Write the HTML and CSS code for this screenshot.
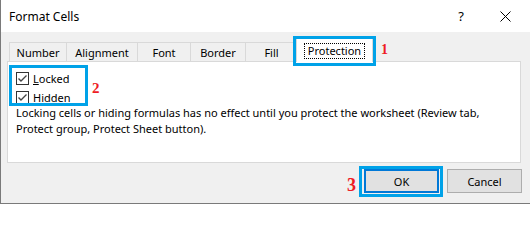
FILE: index.html
```html
<!DOCTYPE html>
<html lang="en">
<head>
<meta charset="utf-8">
<title>Format Cells</title>
<link rel="stylesheet" href="styles.css">
</head>
<body>
<div class="window">
  <div class="titlebar">
    <span class="title">Format Cells</span>
    <span class="help">?</span>
    <svg class="close" width="11" height="11" viewBox="0 0 11 11"><path d="M0.5 0.5 L10.5 10.5 M10.5 0.5 L0.5 10.5" stroke="#000" stroke-width="1" fill="none"/></svg>
  </div>
  <div class="body">
    <div class="tabs">
      <div class="tab t-number">Number</div>
      <div class="tab t-align">Alignment</div>
      <div class="tab t-font">Font</div>
      <div class="tab t-border">Border</div>
      <div class="tab t-fill">Fill</div>
      <div class="tab t-prot selected hl"><span class="focus">Protection</span></div>
      <span class="mark mark1">1</span>
    </div>
    <div class="panel">
      <div class="checks">
        <label class="check"><svg class="box" width="13" height="13" viewBox="0 0 13 13"><rect x="0.5" y="0.5" width="12" height="12" fill="#fff" stroke="#333"/><path d="M2.5 6.5 L5 9 L10.5 3.5" stroke="#444" stroke-width="1.4" fill="none"/></svg><span><u>L</u>ocked</span></label>
        <label class="check"><svg class="box" width="13" height="13" viewBox="0 0 13 13"><rect x="0.5" y="0.5" width="12" height="12" fill="#fff" stroke="#333"/><path d="M2.5 6.5 L5 9 L10.5 3.5" stroke="#444" stroke-width="1.4" fill="none"/></svg><span>H<u>i</u>dden</span></label>
      </div>
      <span class="hl-checks"></span>
      <span class="mark mark2">2</span>
      <p class="desc">Locking cells or hiding formulas has no effect until you protect the worksheet (Review tab,<br>Protect group, Protect Sheet button).</p>
    </div>
    <div class="buttons">
      <div class="okwrap hl">
        <span class="mark mark3">3</span>
        <button class="btn ok">OK</button>
      </div>
      <button class="btn">Cancel</button>
    </div>
  </div>
</div>
</body>
</html>
```
FILE: styles.css
```css
* { box-sizing: border-box; }
html, body { margin: 0; padding: 0; }
body {
  width: 530px;
  height: 204px;
  overflow: hidden;
  background: #fff;
  color: #000;
  font-family: "Noto Sans", "Open Sans", sans-serif;
  font-size: 11px;
}
.window {
  width: 530px;
  height: 204px;
  border-left: 1px solid #7a7a7a;
  border-bottom: 1px solid #7a7a7a;
  display: flex;
  flex-direction: column;
}
.titlebar {
  flex: none;
  height: 32px;
  background: #fff;
  display: flex;
  align-items: center;
  padding-left: 8px;
}
.title { flex: 1; font-size: 12px; }
.help { font-size: 13px; margin-right: 36px; }
.close { display: block; margin-right: 19px; }

.body {
  flex: 1;
  background: #f0f0f0;
  padding: 6px 9px 0 6px;
  display: flex;
  flex-direction: column;
}
.tabs {
  position: relative;
  z-index: 1;
  display: flex;
  align-items: flex-end;
  height: 23px;
  padding-left: 2px;
}
.tab {
  height: 19px;
  border: 1px solid #d9d9d9;
  border-bottom: none;
  margin-right: -1px;
  background: #f0f0f0;
  display: flex;
  align-items: center;
  justify-content: center;
  white-space: nowrap;
}
.t-number { width: 58px; }
.t-align { width: 72px; }
.t-font { width: 54px; }
.t-border { width: 56px; }
.t-fill { width: 53px; }
.t-prot { width: 77px; }
.tab.selected {
  position: relative;
  height: 24px;
  margin-left: -1px;
  margin-bottom: -1px;
  background: #fff;
}
.focus {
  border: 1px dotted #000;
  padding: 0 3px;
  line-height: 14px;
}
.hl { position: relative; }
.hl::after {
  content: "";
  position: absolute;
  left: -4px;
  top: -3px;
  right: -4px;
  bottom: -4px;
  border: 3px solid #00a2e8;
  pointer-events: none;
}
.okwrap.hl::after { left: -5px; }

.mark {
  position: absolute;
  font-family: "Liberation Serif", serif;
  font-weight: bold;
  color: #ee1c25;
  line-height: 1;
}
.mark1 { font-size: 14px; left: 374px; top: 5px; }
.mark2 { font-size: 15px; left: 84px; top: 19px; }
.mark3 { font-size: 18px; left: -17px; top: 7px; }

.panel {
  position: relative;
  height: 102px;
  background: #fff;
  border: 1px solid #d9d9d9;
  padding: 7px 0 0 8px;
}
.checks { display: flex; flex-direction: column; }
.check {
  display: flex;
  align-items: center;
  height: 19px;
  gap: 4px;
}
.box { display: block; flex: none; }
.hl-checks {
  position: absolute;
  left: 1px;
  top: 3px;
  width: 79px;
  height: 41px;
  border: 3px solid #00a2e8;
}
.desc {
  margin: -2px 0 0;
  line-height: 16px;
  white-space: nowrap;
}

.buttons {
  display: flex;
  justify-content: flex-end;
  gap: 8px;
  margin-top: 6px;
  margin-right: -1px;
}
.btn {
  width: 75px;
  height: 24px;
  margin: 0;
  padding: 0;
  background: #e1e1e1;
  border: 1px solid #adadad;
  font-family: inherit;
  font-size: 11px;
  color: #000;
}
.btn.ok { display: block; border: 2px solid #0078d7; }
```
